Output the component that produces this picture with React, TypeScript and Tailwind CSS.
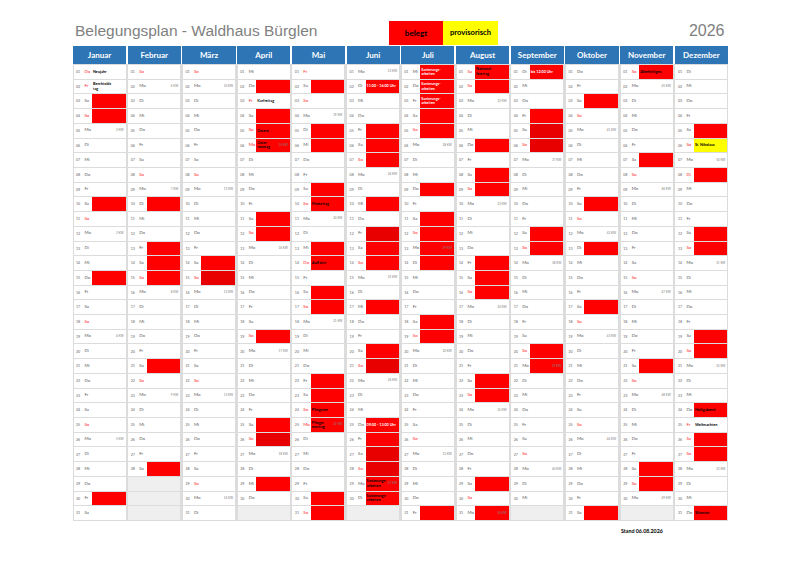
import React from 'react';

const YEAR = 2026;

const MONTHS = [
  'Januar', 'Februar', 'März', 'April', 'Mai', 'Juni',
  'Juli', 'August', 'September', 'Oktober', 'November', 'Dezember',
];

const WEEKDAYS = ['So', 'Mo', 'Di', 'Mi', 'Do', 'Fr', 'Sa'];

// belegte Tage je Monat
const BOOKED: number[][] = [
  [3, 4, 10, 15, 30],
  [10, 13, 14, 15, 21, 28],
  [14, 15],
  [2, 4, 5, 6, 11, 12, 19, 25, 26, 29],
  [2, 5, 6, 9, 10, 13, 14, 16, 17, 22, 23, 24, 25, 30, 31],
  [2, 5, 6, 7, 10, 12, 13, 14, 17, 20, 21, 25, 26, 27, 28, 29, 30],
  [1, 2, 3, 4, 5, 9, 11, 12, 13, 14, 18, 19, 31],
  [1, 2, 6, 8, 9, 14, 15, 16, 22, 23, 29, 31],
  [1, 4, 5, 6, 12, 13, 20, 21],
  [3, 10, 13, 17, 31],
  [1, 7, 21, 28, 29],
  [5, 8, 12, 13, 19, 20, 24, 26, 27, 31],
];

// etwas dunklere Felder im Original
const DARK = ['3-15', '4-26', '6-12', '6-21', '6-27', '6-28', '9-5', '9-6'];

const PROVISORISCH = ['12-6'];

const HOLIDAYS = ['1-1', '1-2', '4-3', '4-5', '4-6', '5-1', '5-14', '5-24', '5-25', '8-1', '12-8', '12-25', '12-26'];

interface Label {
  text: string;
  light?: boolean;
}

const LABELS: Record<string, Label> = {
  '1-1': { text: 'Neujahr' },
  '1-2': { text: 'Berchtolds\ntag' },
  '4-3': { text: 'Karfreitag' },
  '4-5': { text: 'Ostern' },
  '4-6': { text: 'Oster\nmontag' },
  '5-10': { text: 'Muttertag' },
  '5-14': { text: 'Auffahrt' },
  '5-24': { text: 'Pfingsten' },
  '5-25': { text: 'Pfingst\nmontag' },
  '6-2': { text: '11:00 - 16:00 Uhr', light: true },
  '6-25': { text: '09:00 - 13:00 Uhr', light: true },
  '6-29': { text: 'Sanierungs-\narbeiten' },
  '6-30': { text: 'Sanierungs-\narbeiten' },
  '7-1': { text: 'Sanierungs-\narbeiten', light: true },
  '7-2': { text: 'Sanierungs-\narbeiten', light: true },
  '7-3': { text: 'Sanierungs-\narbeiten', light: true },
  '8-1': { text: 'National-\nfeiertag' },
  '9-1': { text: 'bis 12:00 Uhr', light: true },
  '11-1': { text: 'Allerheiligen' },
  '12-6': { text: 'St. Nikolaus' },
  '12-24': { text: 'Heiligabend' },
  '12-25': { text: 'Weihnachten' },
  '12-31': { text: 'Silvester' },
};

function isoWeek(date: Date) {
  const t = new Date(Date.UTC(date.getFullYear(), date.getMonth(), date.getDate()));
  const day = t.getUTCDay() || 7;
  t.setUTCDate(t.getUTCDate() + 4 - day);
  const start = new Date(Date.UTC(t.getUTCFullYear(), 0, 1));
  return Math.ceil(((t.getTime() - start.getTime()) / 86400000 + 1) / 7);
}

function DayCell({ month, day }: { month: number; day: number }) {
  const daysInMonth = new Date(YEAR, month + 1, 0).getDate();
  if (day > daysInMonth) {
    return <div className="bg-[#efefef]" />;
  }

  const date = new Date(YEAR, month, day);
  const wd = date.getDay();
  const key = `${month + 1}-${day}`;
  const red = wd === 0 || HOLIDAYS.includes(key);
  const label = LABELS[key];

  let fill = '';
  if (PROVISORISCH.includes(key)) fill = 'bg-[#ffff00]';
  else if (DARK.includes(key)) fill = 'bg-[#e80000]';
  else if (BOOKED[month].includes(day)) fill = 'bg-[#ff0000]';

  return (
    <div className="flex items-stretch bg-white min-h-0 overflow-hidden">
      <span className="w-[11px] shrink-0 pl-[2.5px] self-center text-[3.6px] text-[#666666] leading-none">
        {String(day).padStart(2, '0')}
      </span>
      <span className={`w-[7.5px] shrink-0 self-center text-[4.4px] leading-none ${red ? 'text-[#ff1a1a]' : 'text-[#595959]'}`}>
        {WEEKDAYS[wd]}
      </span>
      <div className={`flex-1 flex items-center min-w-0 pl-[1px] pr-[2px] ${fill}`}>
        {label && (
          <span
            className={`whitespace-pre font-bold leading-[1.15] ${label.light ? 'text-white text-[3.7px]' : 'text-black text-[3.8px]'}`}
          >
            {label.text}
          </span>
        )}
        {wd === 1 && (
          <span className="ml-auto text-[3px] leading-none text-[#808080] whitespace-nowrap">
            {isoWeek(date)} KW
          </span>
        )}
      </div>
    </div>
  );
}

export default function App() {
  const rows = Array.from({ length: 31 }, (_, i) => i + 1);

  return (
    <div className="w-[799px] h-[565px] bg-white overflow-hidden font-['Lato',sans-serif]">
      <div className="ml-[73px] w-[655px]">
        {/* Kopfzeile */}
        <div className="flex items-start h-[46px] pt-[21px]">
          <div className="w-[316px] shrink-0">
            <h1 className="ml-[2px] mt-[1.6px] text-[15.5px] leading-none text-[#7f7f7f] font-['Liberation_Sans',Arial,sans-serif] whitespace-nowrap">
              Belegungsplan - Waldhaus Bürglen
            </h1>
          </div>
          <div className="flex h-[24px]">
            <div className="w-[54px] bg-[#ff0000] flex items-center justify-center text-[8px] font-bold text-black">
              belegt
            </div>
            <div className="w-[55px] bg-[#ffff00] flex items-center justify-center text-[7.6px] font-bold text-black">
              provisorisch
            </div>
          </div>
          <div className="ml-auto mr-[3.5px] mt-[2.2px] text-[16px] leading-none text-[#7f7f7f] font-['Liberation_Sans',Arial,sans-serif]">
            2026
          </div>
        </div>

        {/* Monatsnamen */}
        <div className="grid grid-cols-12 gap-x-[1.6px]">
          {MONTHS.map((m) => (
            <div key={m} className="h-[18px] bg-[#2e75b6] flex items-center justify-center text-white text-[8px] font-bold">
              {m}
            </div>
          ))}
        </div>

        {/* Tage */}
        <div className="grid grid-cols-12 gap-x-[1.6px] bg-[#dcdcdc] h-[457px] py-px">
          {MONTHS.map((m, mi) => (
            <div key={m} className="grid grid-rows-[repeat(31,minmax(0,1fr))] gap-y-px px-[0.5px] min-h-0">
              {rows.map((d) => (
                <DayCell key={d} month={mi} day={d} />
              ))}
            </div>
          ))}
        </div>

        <div className="ml-[548px] mt-[8px] text-[5.3px] font-bold text-black leading-none">
          Stand 06.08.2026
        </div>
      </div>
    </div>
  );
}
